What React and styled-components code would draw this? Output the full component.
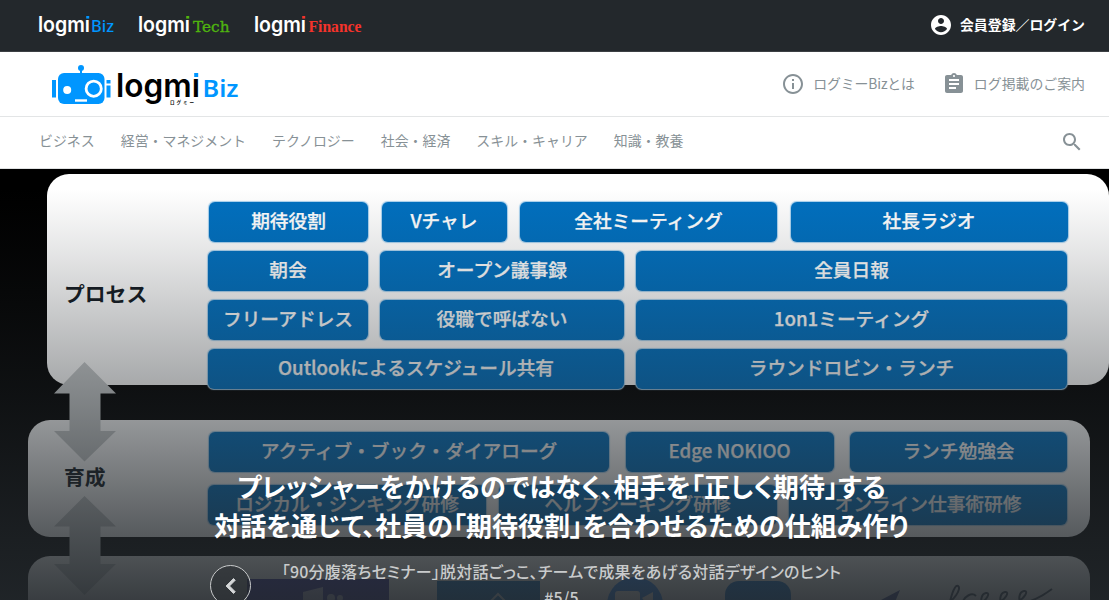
import React from "react";
import styled, { createGlobalStyle } from "styled-components";

const Global = createGlobalStyle`
  *, *::before, *::after { box-sizing: border-box; }
  html, body { margin: 0; height: 600px; overflow: hidden; background: #fff; }
  body { font-family: "Noto Sans CJK JP", sans-serif; color: #879196; }
`;

const Page = styled.div`
  width: 1109px;
  height: 600px;
  overflow: hidden;
  display: flex;
  flex-direction: column;
`;

const TopBar = styled.header`
  flex: none;
  height: 52px;
  padding: 0 24px 3px 38px;
  display: flex;
  align-items: center;
  justify-content: space-between;
  background: #23282c;
  border-bottom: 1px solid #3c4043;
`;

const SiteLinks = styled.nav`
  display: flex;
  gap: 22px;
  align-items: center;
`;

const Login = styled.a`
  display: flex;
  align-items: center;
  gap: 7px;
  padding-top: 1px;
  color: #fff;
  font-size: 13.9px;
  font-weight: 700;
  line-height: 22px;
`;

const LoginText = styled.span`
  padding-bottom: 2px;
`;

const BrandBar = styled.div`
  flex: none;
  height: 65px;
  padding: 0 24px 0 48px;
  display: flex;
  align-items: center;
  justify-content: space-between;
  border-bottom: 1px solid #e3e5e6;
`;

const BrandLinks = styled.div`
  display: flex;
  gap: 27px;
`;

const BrandLink = styled.a`
  display: flex;
  align-items: center;
  gap: 8px;
  font-size: 13.9px;
  line-height: 22px;
  letter-spacing: ${(p) => p.$tracking || 0}px;
`;

const LinkText = styled.span`
  padding-bottom: 2px;
`;

const CategoryBar = styled.nav`
  flex: none;
  height: 52px;
  padding: 0 25px 2px 39px;
  display: flex;
  align-items: center;
  justify-content: space-between;
  border-bottom: 1px solid #dfe1e2;
`;

const Categories = styled.div`
  display: flex;
  gap: 26px;
  padding-bottom: 3px;
  font-size: 13.93px;
`;

const Icon = styled.svg`
  display: block;
  width: ${(p) => p.$size}px;
  height: ${(p) => p.$size}px;
  fill: currentColor;
`;

const Drawing = styled.svg`
  display: block;
  overflow: visible;
  flex: none;
`;

const Hero = styled.section`
  position: relative;
  flex: 1;
  overflow: hidden;
  background: #000;
`;

const Slide = styled.div`
  padding: 5px 0 0 28px;
  display: flex;
  flex-direction: column;
`;

const Panel = styled.div`
  width: 1062px;
  height: ${(p) => p.$h}px;
  margin: 0 0 ${(p) => p.$after || 0}px ${(p) => p.$shift || 0}px;
  padding-top: ${(p) => p.$top}px;
  padding-left: ${(p) => p.$left}px;
  display: flex;
  background: #fff;
  border-radius: 22px;
`;

const PanelLabel = styled.div`
  flex: none;
  width: ${(p) => p.$w}px;
  padding-top: ${(p) => p.$top}px;
  color: #111820;
  font-size: 20.8px;
  font-weight: 700;
  line-height: 30px;
  white-space: nowrap;
`;

const Rows = styled.div`
  display: flex;
  flex-direction: column;
  gap: ${(p) => p.$gap}px;
`;

const Row = styled.div`
  display: flex;
  gap: ${(p) => p.$gap}px;
  padding-left: ${(p) => p.$inset || 0}px;
`;

const Box = styled.div`
  flex: none;
  width: ${(p) => p.$w}px;
  height: 40px;
  display: flex;
  align-items: center;
  justify-content: center;
  padding-bottom: 5px;
  background: #0070c0;
  border-radius: 6px;
  box-shadow: 0 0 1px 0.5px #a5d0ef;
  color: #fff;
  font-size: 18.7px;
  font-weight: 500;
  -webkit-text-stroke: 0.25px currentColor;
  white-space: nowrap;
`;

const Arrows = styled(Drawing)`
  position: absolute;
  left: 50px;
  top: 193px;
`;

const Shade = styled.div`
  position: absolute;
  inset: 0;
  background: linear-gradient(
    rgba(35, 40, 44, 0) 20px,
    rgba(35, 40, 44, 0.12) 85px,
    rgba(35, 40, 44, 0.4) 216px,
    rgba(35, 40, 44, 0.76) 365px,
    rgba(35, 40, 44, 0.9) 431px
  );
`;

const Caption = styled.div`
  position: absolute;
  inset: 297px 0 auto 14px;
  display: flex;
  flex-direction: column;
  align-items: center;
  text-align: center;
  font-feature-settings: "palt";
`;

const Title = styled.h1`
  margin: 0;
  color: #fff;
  font-size: 26px;
  line-height: 39px;
  font-weight: 700;
`;

const TitleLead = styled.span`
  letter-spacing: 0.15px;
`;

const Subtitle = styled.p`
  margin: 14px 0 0;
  color: #c9cbcc;
  font-size: 16px;
  line-height: 26px;
  font-weight: 500;
  letter-spacing: 0.21px;
`;

const Prev = styled.button`
  position: absolute;
  left: 210px;
  top: 396px;
  width: 41px;
  height: 41px;
  padding: 0;
  display: flex;
  align-items: center;
  justify-content: center;
  border: 1px solid #c9cbcc;
  border-radius: 50%;
  background: rgba(35, 40, 44, 0.5);
  color: #d5d7d8;
  stroke: #d5d7d8;
  stroke-width: 0.7;
`;

function SiteLogo({ width, tail, tailX, tailW, color, font, size, weight, stroke = 0 }) {
  return (
    <Drawing width={width} height="28" viewBox={`0 0 ${width} 28`}>
      <text x="0" y="21.8" textLength="52" lengthAdjust="spacingAndGlyphs" fontFamily="Inter" fontWeight="600" fontSize="20.8" fill="#fff">logmi</text>
      <rect x="47" y="4" width="5" height="5" fill="#23282c" />
      <rect x="48.2" y="6" width="3" height="2.6" fill={color} />
      <text x={tailX} y="21.8" textLength={tailW} lengthAdjust="spacingAndGlyphs" fontFamily={font} fontWeight={weight} fontSize={size} fill={color} stroke={color} strokeWidth={stroke}>{tail}</text>
    </Drawing>
  );
}

function BrandLogo() {
  return (
    <Drawing width="192" height="44" viewBox="48 62 192 44">
      <g fill="#0096ff">
        <circle cx="81" cy="68" r="3" />
        <rect x="80" y="69" width="2" height="5" />
        <rect x="58" y="73" width="46.5" height="31" rx="6" />
        <rect x="52" y="80" width="4" height="17.5" />
        <rect x="106.5" y="80" width="4" height="3.5" />
        <rect x="106.5" y="85.5" width="4" height="12" />
      </g>
      <circle cx="67.2" cy="90" r="4" fill="#fff" />
      <circle cx="93.7" cy="88.7" r="7.6" fill="#0096ff" stroke="#fff" strokeWidth="2.8" />
      <rect x="75" y="99.3" width="12" height="2.4" fill="#fff" />
      <text x="116" y="97.3" textLength="84" lengthAdjust="spacingAndGlyphs" fontFamily="Inter" fontWeight="600" fontSize="32.5" fill="#000">logmi</text>
      <rect x="192.5" y="70" width="8" height="7.8" fill="#fff" />
      <rect x="194.2" y="73" width="4" height="4" fill="#0096ff" />
      <text x="202.5" y="97.3" textLength="36" lengthAdjust="spacingAndGlyphs" fontFamily="Noto Sans" fontWeight="600" fontSize="24" fill="#0096ff">Biz</text>
      <text x="170" y="104.3" textLength="24" fontFamily="Noto Sans CJK JP" fontWeight="700" fontSize="4.5" fill="#000">ログミー</text>
    </Drawing>
  );
}

function ToolLogos() {
  return (
    <Drawing width="850" height="60" viewBox="240 556 850 60">
      <rect x="247" y="579" width="142" height="50" fill="#35309b" />
      <path d="M303 592l20-5v30h-20z" fill="#b9b6d8" />
      <circle cx="331" cy="598" r="4" fill="#b9b6d8" />
      <circle cx="340" cy="598" r="3" fill="#b9b6d8" />
      <rect x="437" y="581" width="103" height="40" fill="#1675c4" />
      <path d="M490 602l8-8 8 8" fill="none" stroke="#e3eef8" strokeWidth="2" />
      <circle cx="635" cy="605" r="28" fill="#2d8cff" />
      <rect x="615" y="591" width="25" height="20" rx="3" fill="#fff" />
      <path d="M642 598l11-6v20z" fill="#fff" />
      <rect x="725" y="581" width="66" height="40" rx="14" fill="#1675d0" />
      <path d="M881 600l19-10-5 12z" fill="#3c4690" />
      <path d="M944 604c10-2 18-16 14-18s-8 14-9 22m13-4c2-8 10-12 14-8m2 8c9-3 13-12 8-11s-7 10-1 12m12-2c9-3 13-12 8-11s-7 10-1 12m12-2c9-3 13-12 8-11s-7 10-1 12c10-2 21-8 29-14" fill="none" stroke="#3c4658" strokeWidth="2" />
    </Drawing>
  );
}

const categories = ["ビジネス", "経営・マネジメント", "テクノロジー", "社会・経済", "スキル・キャリア", "知識・教養"];

export default function App() {
  return (
    <Page>
      <Global />
      <TopBar>
        <SiteLinks>
          <SiteLogo width={78} tail="Biz" tailX={53} tailW={23} color="#0096ff" font="Noto Sans" size={15.5} weight="500" />
          <SiteLogo width={94} tail="Tech" tailX={55} tailW={36.5} color="#4fb40f" font="DejaVu Serif" size={15.5} weight="400" stroke={0.35} />
          <SiteLogo width={110} tail="Finance" tailX={54.5} tailW={53} color="#f4332b" font="Liberation Serif" size={16} weight="700" />
        </SiteLinks>
        <Login>
          <Icon $size={24} viewBox="0 0 24 24">
            <path d="M12 2C6.480 2 2 6.480 2 12s4.480 10 10 10 10-4.480 10-10S17.520 2 12 2zm0 3c1.660 0 3 1.340 3 3s-1.340 3-3 3-3-1.340-3-3 1.340-3 3-3zm0 14.200c-2.500 0-4.710-1.280-6-3.220.030-1.990 4-3.080 6-3.080 1.990 0 5.970 1.090 6 3.080-1.290 1.940-3.500 3.220-6 3.220z" />
          </Icon>
          <LoginText>会員登録／ログイン</LoginText>
        </Login>
      </TopBar>
      <BrandBar>
        <BrandLogo />
        <BrandLinks>
          <BrandLink $tracking={-0.15}>
            <Icon $size={24} viewBox="0 0 24 24">
              <path d="M11 7h2v2h-2zm0 4h2v6h-2zm1-9C6.480 2 2 6.480 2 12s4.480 10 10 10 10-4.480 10-10S17.520 2 12 2zm0 18c-4.410 0-8-3.590-8-8s3.590-8 8-8 8 3.590 8 8-3.590 8-8 8z" />
            </Icon>
            <LinkText>ログミーBizとは</LinkText>
          </BrandLink>
          <BrandLink>
            <Icon $size={24} viewBox="0 0 24 24">
              <path d="M19 3h-4.180C14.400 1.840 13.300 1 12 1c-1.300 0-2.400.84-2.820 2H5c-1.100 0-2 .9-2 2v14c0 1.100.9 2 2 2h14c1.100 0 2-.9 2-2V5c0-1.100-.9-2-2-2zm-7 0c.55 0 1 .45 1 1s-.45 1-1 1-1-.45-1-1 .45-1 1-1zm2 14H7v-2h7v2zm3-4H7v-2h10v2zm0-4H7V7h10v2z" />
            </Icon>
            <LinkText>ログ掲載のご案内</LinkText>
          </BrandLink>
        </BrandLinks>
      </BrandBar>
      <CategoryBar>
        <Categories>{categories.map((c) => <span key={c}>{c}</span>)}</Categories>
        <Icon $size={24} viewBox="0 0 24 24">
          <path d="M15.500 14h-.79l-.28-.27C15.410 12.590 16 11.110 16 9.500 16 5.910 13.090 3 9.500 3S3 5.910 3 9.500 5.910 16 9.500 16c1.610 0 3.090-.59 4.230-1.570l.27.28v.79l5 4.990L20.490 19l-4.990-5zm-6 0C7.010 14 5 11.990 5 9.500S7.010 5 9.500 5 14 7.010 14 9.500 11.990 14 9.500 14z" />
        </Icon>
      </CategoryBar>
      <Hero>
        <Slide>
          <Panel $h={211} $shift={19} $after={35} $top={28} $left={17}>
            <PanelLabel $w={144} $top={76}>プロセス</PanelLabel>
            <Rows $gap={9}>
              <Row $gap={13.500} $inset={1}><Box $w={159}>期待役割</Box><Box $w={125}>Vチャレ</Box><Box $w={257}>全社ミーティング</Box><Box $w={277}>社長ラジオ</Box></Row>
              <Row $gap={12}><Box $w={160}>朝会</Box><Box $w={244}>オープン議事録</Box><Box $w={431}>全員日報</Box></Row>
              <Row $gap={12}><Box $w={160}>フリーアドレス</Box><Box $w={244}>役職で呼ばない</Box><Box $w={431}>1on1ミーティング</Box></Row>
              <Row $gap={12}><Box $w={416}>Outlookによるスケジュール共有</Box><Box $w={431}>ラウンドロビン・ランチ</Box></Row>
            </Rows>
          </Panel>
          <Panel $h={117} $after={19} $top={12} $left={36}>
            <PanelLabel $w={144} $top={29}>育成</PanelLabel>
            <Rows $gap={13}>
              <Row $gap={16.500} $inset={1}><Box $w={400}>アクティブ・ブック・ダイアローグ</Box><Box $w={208}>Edge NOKIOO</Box><Box $w={217}>ランチ勉強会</Box></Row>
              <Row $gap={12.500}><Box $w={278}>ロジカル・シンキング研修</Box><Box $w={278}>ヘルプシーキング研修</Box><Box $w={278}>オンライン仕事術研修</Box></Row>
            </Rows>
          </Panel>
          <Panel $h={150} $top={0} $left={212}>
            <ToolLogos />
          </Panel>
        </Slide>
        <Arrows width="70" height="240" viewBox="50 362 70 240">
          <path d="M84.500 362L116 393.500H100.500V431H116L84.500 461.500 54 431H69.500V393.500H54zM84.500 496L116 526.500H100.500V564H116L84.500 595 54 564H69.500V526.500H54z" fill="#c8cbcc" />
        </Arrows>
        <Shade />
        <Caption>
          <Title><TitleLead>プレッシャーをかけるのではなく、相手を「正しく期待」する</TitleLead><br />対話を通じて、社員の「期待役割」を合わせるための仕組み作り</Title>
          <Subtitle>「90分腹落ちセミナー」脱対話ごっこ、チームで成果をあげる対話デザインのヒント<br />#5/5</Subtitle>
        </Caption>
        <Prev aria-label="前へ">
          <Icon $size={30} viewBox="0 0 24 24"><path d="M15.410 7.410L14 6l-6 6 6 6 1.410-1.410L10.830 12z" /></Icon>
        </Prev>
      </Hero>
    </Page>
  );
}
